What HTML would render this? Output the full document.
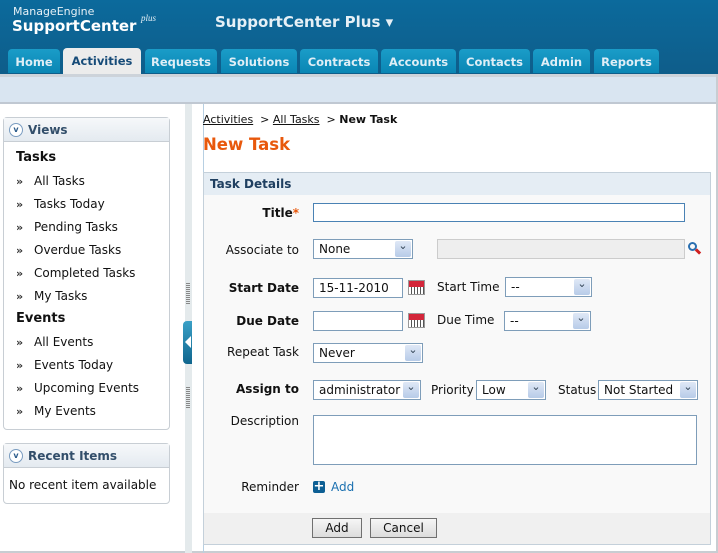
<!DOCTYPE html>
<html><head><meta charset="utf-8"><style>
*{margin:0;padding:0;box-sizing:border-box}
body{width:718px;height:553px;overflow:hidden;background:#fff;font-family:"DejaVu Sans","Liberation Sans",sans-serif;font-size:12px;color:#111;position:relative}
.abs{position:absolute}
#hdr{left:0;top:0;width:718px;height:74px;background:linear-gradient(#0c6a9c,#0e5d8a)}
.tab{position:absolute;top:49px;height:24px;background:linear-gradient(#1a9cc8,#0a86b4);border-radius:4px 4px 0 0;color:#dfeef6;font-weight:bold;font-size:11.5px;text-align:center;line-height:26px}
.tab.on{background:#ececec;color:#164b78;top:48px;height:26px;line-height:27px}
#bar{left:0;top:74px;width:718px;height:30px;background:#d9e5f1;border-top:3px solid #cdd3da;border-bottom:2px solid #c0c8d2}
.box{position:absolute;border:1px solid #c8ced4;border-radius:4px;background:#fff}
.bh{height:24px;background:linear-gradient(#f6f8fa,#e4eaf0);border-bottom:1px solid #c8ced4;font-weight:bold;color:#324e6a;font-size:12px;line-height:24px;padding-left:24px;position:relative}
.bh i{position:absolute;left:5px;top:5px;width:14px;height:14px;border:1px solid #7a9cc0;border-radius:50%;background:#fff;font-style:normal;font-size:8px;line-height:12px;text-align:center;color:#2a5a8a}
.it{position:absolute;left:16px;font-size:12px}
.it b{display:inline-block;width:18px;font-size:11px;color:#333;font-weight:bold}
.sec{position:absolute;left:12px;font-weight:bold;font-size:13px}
.lbl{position:absolute;font-size:12px;text-align:right;width:95px;left:204px}
.bl{font-weight:bold;font-size:12px}
.in{position:absolute;border:1px solid #7e9db9;background:#fff;height:20px;font-size:12px;line-height:18px;padding-left:5px}
.sel:after{content:"⌄";position:absolute;right:1px;top:1px;width:16px;height:16px;background:linear-gradient(#dfe8f6,#b7cbe8);color:#345;font-size:11px;line-height:9px;text-align:center;border-radius:2px}
.cal{position:absolute;width:17px;height:15px;border:1px solid #999;background:repeating-linear-gradient(90deg,#fff 0 2px,#555 2px 3px);}
.cal:before{content:"";position:absolute;left:0;top:0;right:0;height:6px;background:#d3263a}
.btn{position:absolute;top:518px;height:20px;border:1px solid #707070;background:linear-gradient(#f6f6f6,#dcdcdc);font-size:12px;text-align:center;line-height:18px}
</style></head><body>
<div id="hdr" class="abs"></div>
<div class="abs" style="left:13px;top:5px;color:#e6f0f6;font-size:11px">ManageEngine</div>
<div class="abs" style="left:12px;top:17px;color:#fff;font-size:15px;font-weight:bold">SupportCenter</div>
<div class="abs" style="left:141px;top:13px;color:#e6f0f6;font-size:9px;font-style:italic;font-family:'Liberation Serif',serif">plus</div>
<div class="abs" style="left:215px;top:13px;color:#e6f0f6;font-size:15px;font-weight:bold">SupportCenter Plus ▾</div>
<div class="tab" style="left:8px;width:52px">Home</div>
<div class="tab on" style="left:63px;width:78px">Activities</div>
<div class="tab" style="left:145px;width:72px">Requests</div>
<div class="tab" style="left:221px;width:76px">Solutions</div>
<div class="tab" style="left:300px;width:78px">Contracts</div>
<div class="tab" style="left:381px;width:75px">Accounts</div>
<div class="tab" style="left:459px;width:71px">Contacts</div>
<div class="tab" style="left:533px;width:57px">Admin</div>
<div class="tab" style="left:594px;width:65px">Reports</div>
<div id="bar" class="abs"></div>
<div class="abs" style="left:716px;top:74px;width:2px;height:479px;background:#c8cdd2"></div>
<div class="abs" style="left:0;top:551px;width:718px;height:2px;background:#c8cdd2"></div>

<div class="box" style="left:3px;top:117px;width:167px;height:313px">
<div class="bh"><i>v</i>Views</div></div>
<div class="sec" style="left:16px;top:150px">Tasks</div>
<div class="it" style="top:174px"><b>»</b>All Tasks</div>
<div class="it" style="top:197px"><b>»</b>Tasks Today</div>
<div class="it" style="top:220px"><b>»</b>Pending Tasks</div>
<div class="it" style="top:243px"><b>»</b>Overdue Tasks</div>
<div class="it" style="top:266px"><b>»</b>Completed Tasks</div>
<div class="it" style="top:289px"><b>»</b>My Tasks</div>
<div class="sec" style="left:16px;top:311px">Events</div>
<div class="it" style="top:335px"><b>»</b>All Events</div>
<div class="it" style="top:358px"><b>»</b>Events Today</div>
<div class="it" style="top:381px"><b>»</b>Upcoming Events</div>
<div class="it" style="top:404px"><b>»</b>My Events</div>
<div class="box" style="left:3px;top:443px;width:167px;height:61px"><div class="bh"><i>v</i>Recent Items</div></div>
<div class="abs" style="left:9px;top:478px">No recent item available</div>

<div class="abs" style="left:185px;top:104px;width:7px;height:449px;background:#e4eaec"></div>
<div class="abs" style="left:186px;top:283px;width:4px;height:22px;background:repeating-linear-gradient(#888 0 1px,transparent 1px 2px)"></div>
<div class="abs" style="left:186px;top:387px;width:4px;height:22px;background:repeating-linear-gradient(#888 0 1px,transparent 1px 2px)"></div>
<div class="abs" style="left:183px;top:321px;width:9px;height:43px;background:linear-gradient(#3aa0c6,#10668e);border-radius:4px 0 0 4px"></div>
<div class="abs" style="left:185px;top:336px;width:0;height:0;border-top:6px solid transparent;border-bottom:6px solid transparent;border-right:6px solid #fff"></div>
<div class="abs" style="left:203px;top:104px;width:1px;height:449px;background:#b7cfe2"></div>

<div class="abs" style="left:203px;top:113px;font-size:11px"><u>Activities</u> &nbsp;&gt; <u>All Tasks</u> &nbsp;&gt; <b>New Task</b></div>
<div class="abs" style="left:203px;top:135px;color:#e8580c;font-size:16.5px;font-weight:bold">New Task</div>

<div class="abs" style="left:203px;top:172px;width:508px;height:373px;border:1px solid #c4d0da;background:#f9f9f9"></div>
<div class="abs" style="left:204px;top:173px;width:506px;height:22px;background:#e5edf4;font-weight:bold;color:#1f3f60;line-height:22px;padding-left:6px">Task Details</div>
<div class="abs" style="left:204px;top:513px;width:506px;height:31px;background:#f0f0f0"></div>

<div class="lbl bl" style="top:206px">Title<span style="color:#e8580c">*</span></div>
<div class="in" style="left:313px;top:203px;width:372px;height:19px;border-color:#4a82b4"></div>
<div class="lbl" style="top:243px">Associate to</div>
<div class="in sel" style="left:313px;top:239px;width:100px">None</div>
<div class="in" style="left:437px;top:239px;width:248px;background:#eee;border-color:#ccc"></div>
<div class="abs" style="left:688px;top:242px;width:9px;height:9px;border:2px solid #2a6fb0;border-radius:50%"></div>
<div class="abs" style="left:695px;top:250px;width:6px;height:3px;background:#d02020;transform:rotate(45deg)"></div>
<div class="lbl bl" style="top:281px">Start Date</div>
<div class="in" style="left:313px;top:278px;width:90px">15-11-2010</div>
<div class="cal" style="left:408px;top:280px"></div>
<div class="abs" style="left:437px;top:280px">Start Time</div>
<div class="in sel" style="left:505px;top:277px;width:87px">--</div>
<div class="lbl bl" style="top:314px">Due Date</div>
<div class="in" style="left:313px;top:311px;width:90px"></div>
<div class="cal" style="left:408px;top:313px"></div>
<div class="abs" style="left:437px;top:313px">Due Time</div>
<div class="in sel" style="left:504px;top:311px;width:87px">--</div>
<div class="lbl" style="top:345px">Repeat Task</div>
<div class="in sel" style="left:313px;top:343px;width:110px">Never</div>
<div class="lbl bl" style="top:382px">Assign to</div>
<div class="in sel" style="left:313px;top:380px;width:108px">administrator</div>
<div class="abs" style="left:431px;top:383px">Priority</div>
<div class="in sel" style="left:476px;top:380px;width:70px">Low</div>
<div class="abs" style="left:558px;top:383px">Status</div>
<div class="in sel" style="left:598px;top:380px;width:100px">Not Started</div>
<div class="lbl" style="top:414px">Description</div>
<div class="in" style="left:313px;top:415px;width:384px;height:50px"></div>
<div class="lbl" style="top:480px">Reminder</div>
<div class="abs" style="left:313px;top:481px;width:12px;height:12px;background:#0d5f94;border-radius:2px;color:#fff;font-weight:bold;font-size:13px;line-height:12px;text-align:center">+</div>
<div class="abs" style="left:331px;top:480px;color:#1a70b0">Add</div>
<div class="btn" style="left:312px;width:50px">Add</div>
<div class="btn" style="left:370px;width:67px">Cancel</div>
</body></html>
